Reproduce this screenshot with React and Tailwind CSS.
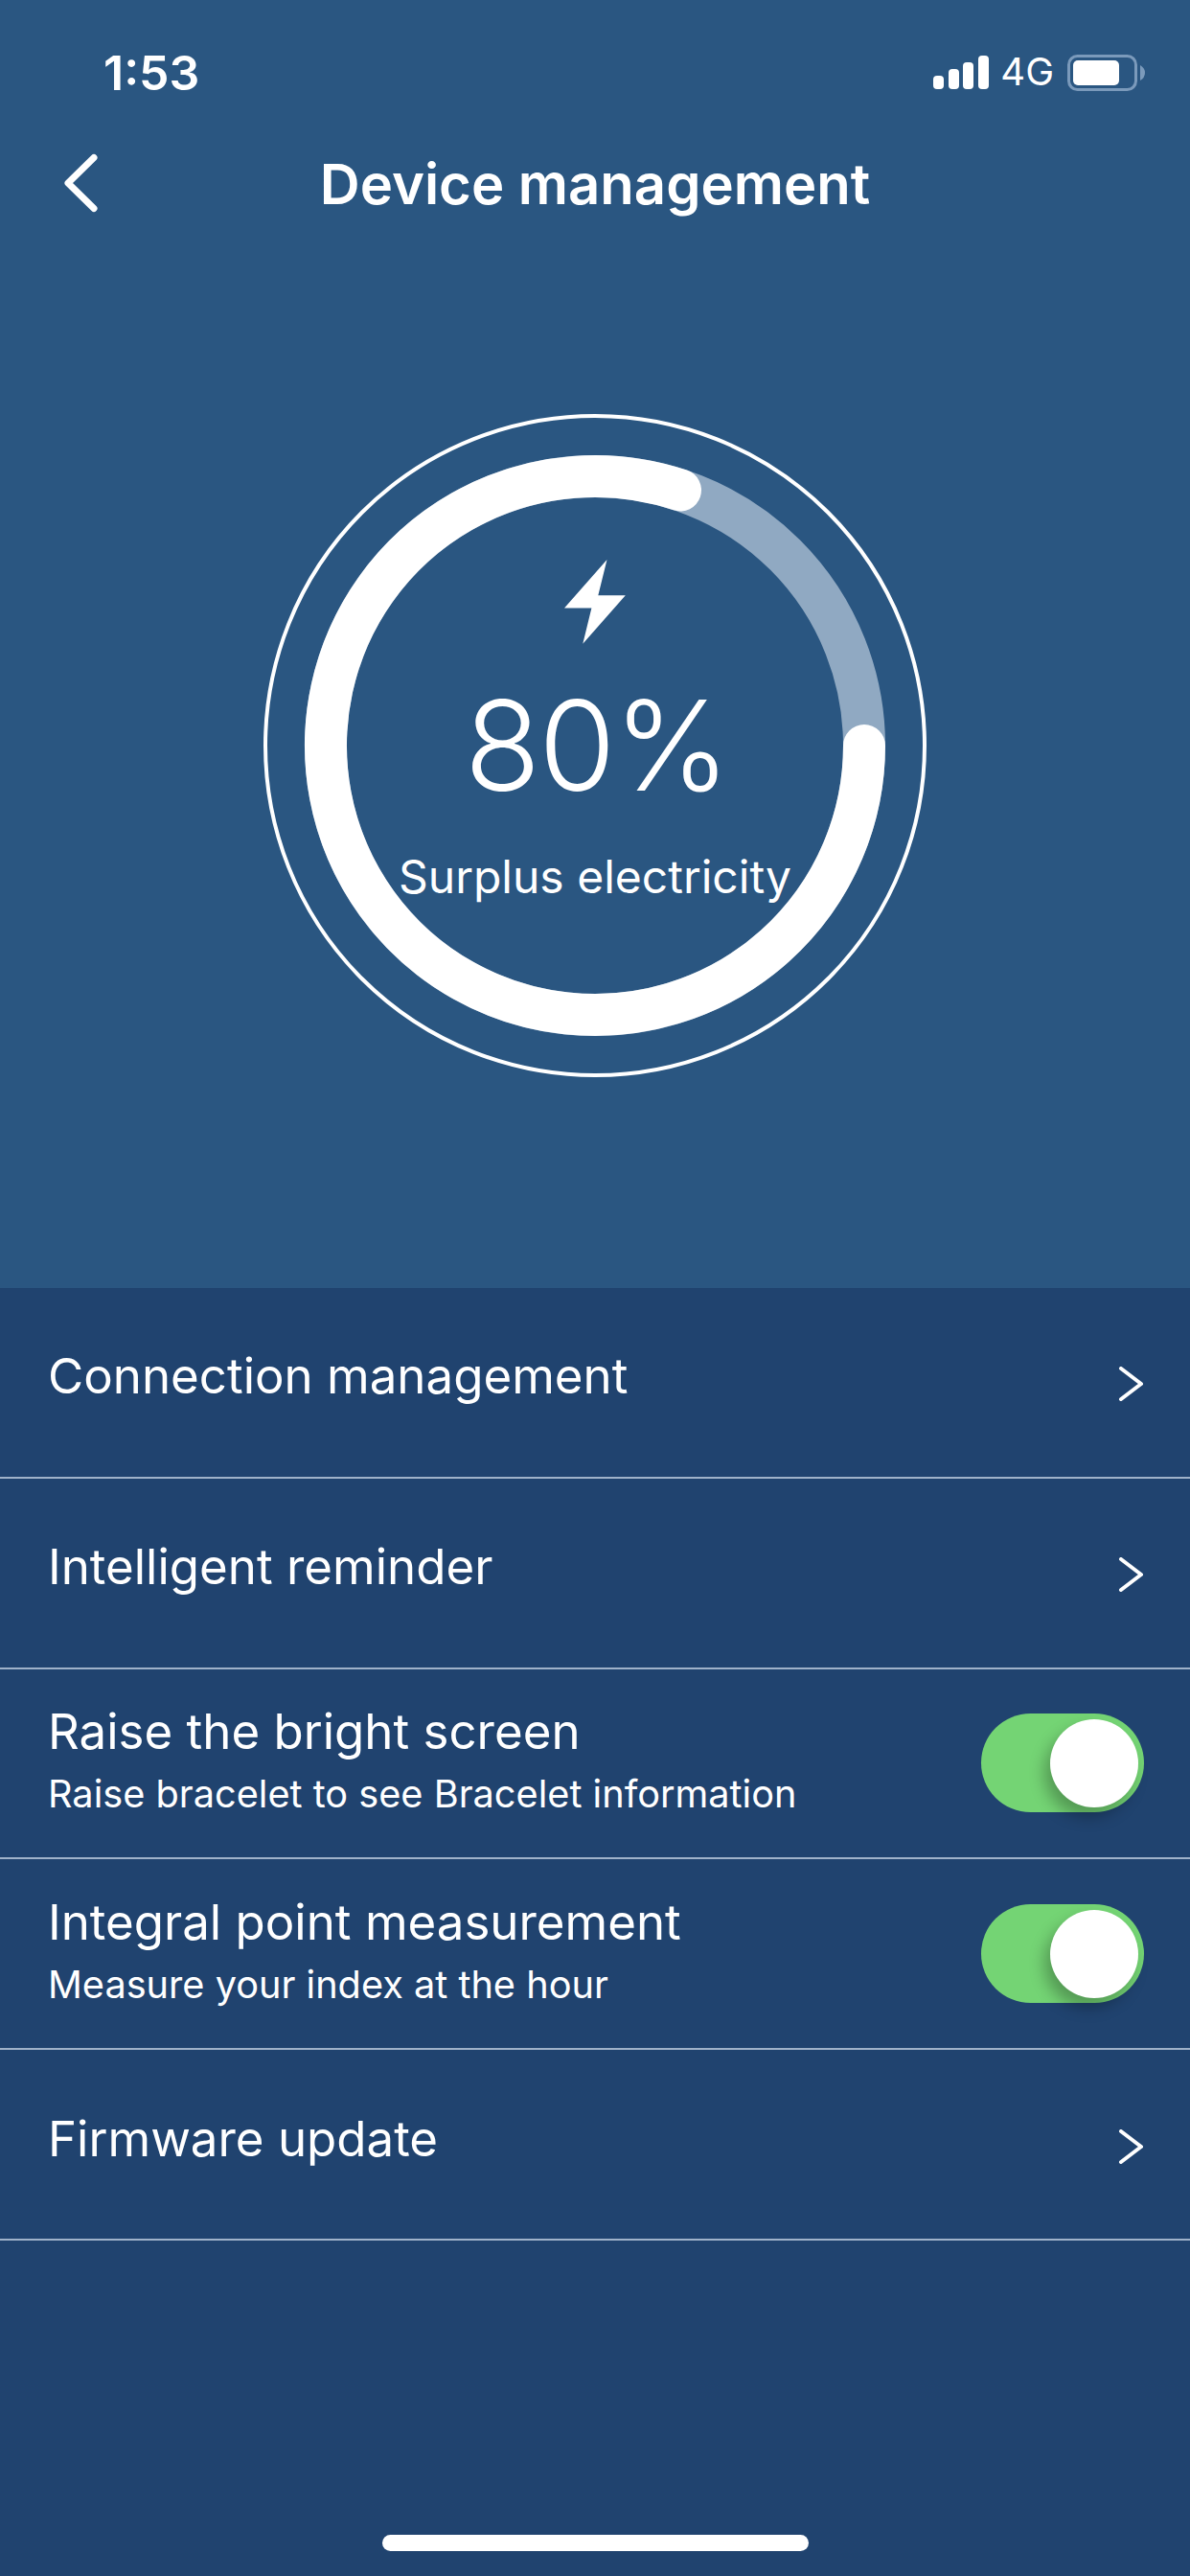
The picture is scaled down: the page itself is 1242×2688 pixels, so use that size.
import React from 'react';

const font = { fontFamily: 'Inter, "Liberation Sans", sans-serif' };

const r = 281;
const cx = 346;
const cy = 346;
// white arc runs clockwise from the 3 o'clock point round to just past 12
const endX = cx + 89;
const endY = cy - Math.sqrt(r * r - 89 * 89);

function Chevron() {
  return (
    <svg width="28" height="36" viewBox="0 0 28 36" fill="none" className="mt-[4px]">
      <path d="M4 2 L25 18 L4 34" stroke="#fff" strokeWidth="4" strokeLinecap="round" strokeLinejoin="round" />
    </svg>
  );
}

function Toggle() {
  return (
    <div className="w-[170px] h-[103px] rounded-full bg-[#74d474] flex items-center justify-end pr-[6px] shrink-0">
      <div className="w-[92px] h-[92px] rounded-full bg-white shadow-[-6px_10px_16px_rgba(0,0,0,0.28)]"></div>
    </div>
  );
}

function LinkRow({ title }) {
  return (
    <div className="h-[198.8px] border-b-2 border-[#9fb2c9] pl-[50px] pr-[48px] flex justify-between items-center">
      <div className="text-[51px] leading-[60px] text-white -mt-[12px]">{title}</div>
      <Chevron />
    </div>
  );
}

function ToggleRow({ title, sub }) {
  return (
    <div className="h-[198.8px] border-b-2 border-[#9fb2c9] pl-[50px] pr-[48px] flex justify-between items-center">
      <div className="text-white -mt-[8px]">
        <div className="text-[51px] leading-[60px]">{title}</div>
        <div className="text-[39.7px] leading-[46px] mt-[12px]">{sub}</div>
      </div>
      <Toggle />
    </div>
  );
}

export default function App() {
  return (
    <div className="w-[1242px] h-[2688px] flex flex-col bg-[#20436f] overflow-hidden" style={font}>
      <div className="h-[1344px] bg-[#2a5681] shrink-0">
        {/* status bar */}
        <div className="h-[156px] pl-[108px] pr-[46px] pt-[50px] flex justify-between items-start text-white">
          <div className="text-[50px] leading-[52px] font-semibold">1:53</div>
          <div className="flex items-start mt-[8px]">
            <svg width="58" height="36" viewBox="0 0 58 36" fill="#fff" className="mr-[12px]">
              <rect x="0" y="21" width="11" height="14" rx="4" />
              <rect x="16" y="14" width="11" height="21" rx="4" />
              <rect x="31" y="7" width="11" height="28" rx="4" />
              <rect x="47" y="0" width="11" height="35" rx="4" />
            </svg>
            <div className="text-[40px] leading-[40px] mt-[-3px] mr-[14px]">4G</div>
            <svg width="82" height="38" viewBox="0 0 82 38" fill="none" className="-mt-[1px]">
              <rect x="1.5" y="1.5" width="70" height="35" rx="9" stroke="#7b9abb" strokeWidth="3" />
              <rect x="6" y="6" width="48" height="26" rx="5" fill="#fff" />
              <path d="M76 11 Q81 14 81 19 Q81 24 76 27 Z" fill="#7b9abb" />
            </svg>
          </div>
        </div>

        {/* nav bar */}
        <div className="relative h-[72px] flex items-center justify-center">
          <svg width="36" height="66" viewBox="0 0 36 66" fill="none" className="absolute left-[66px] top-[2px]">
            <path d="M32 6.5 L5 33 L32 59.5" stroke="#fff" strokeWidth="7" strokeLinecap="round" strokeLinejoin="round" />
          </svg>
          <div className="text-[58px] leading-[72px] font-semibold text-white">Device management</div>
        </div>

        {/* battery ring */}
        <div className="flex justify-center mt-[204px]">
          <div className="relative w-[692px] h-[692px]">
            <svg width="692" height="692" viewBox="0 0 692 692" fill="none">
              <circle cx={cx} cy={cy} r="344" stroke="#fff" strokeWidth="4" />
              <circle cx={cx} cy={cy} r={r} stroke="#90a9c2" strokeWidth="44" />
              <path
                d={`M ${cx + r} ${cy} A ${r} ${r} 0 1 1 ${endX} ${endY}`}
                stroke="#fff"
                strokeWidth="44"
                strokeLinecap="round"
              />
            </svg>
            <div className="absolute inset-0 flex flex-col items-center pt-[152px] text-white">
              <svg width="64" height="88" viewBox="0 0 64 88" fill="#fff">
                <polygon points="44.5,0 0,50.5 28.4,50.5 19.3,87.7 63.8,37.2 35.3,37.2" />
              </svg>
              <div className="text-[130px] leading-[140px] font-[340] tracking-[-2px] mt-[36px] ml-[3px]">80%</div>
              <div className="text-[48px] leading-[60px] mt-[37px]">Surplus electricity</div>
            </div>
          </div>
        </div>
      </div>

      {/* settings list */}
      <LinkRow title="Connection management" />
      <LinkRow title="Intelligent reminder" />
      <ToggleRow title="Raise the bright screen" sub="Raise bracelet to see Bracelet information" />
      <ToggleRow title="Integral point measurement" sub="Measure your index at the hour" />
      <LinkRow title="Firmware update" />

      <div className="flex-1 flex items-end justify-center pb-[26px]">
        <div className="w-[445px] h-[17px] rounded-full bg-white"></div>
      </div>
    </div>
  );
}
